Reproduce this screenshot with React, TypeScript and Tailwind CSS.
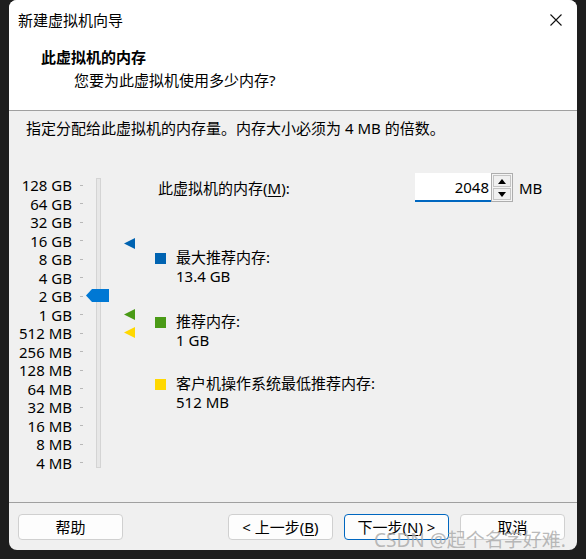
import React from "react";

const labels = [
  "128 GB",
  "64 GB",
  "32 GB",
  "16 GB",
  "8 GB",
  "4 GB",
  "2 GB",
  "1 GB",
  "512 MB",
  "256 MB",
  "128 MB",
  "64 MB",
  "32 MB",
  "16 MB",
  "8 MB",
  "4 MB",
];

function Marker({ color, top }: { color: string; top: string }) {
  return (
    <svg
      className={`absolute left-[115px] ${top}`}
      width="11"
      height="11"
      viewBox="0 0 11 11"
    >
      <polygon points="0,5.5 11,0 11,11" fill={color} />
    </svg>
  );
}

function Legend({
  color,
  title,
  value,
  className,
}: {
  color: string;
  title: string;
  value: string;
  className: string;
}) {
  return (
    <div className={`flex ${className}`}>
      <div className={`w-[11px] h-[11px] mt-[5px] ${color}`} />
      <div className="ml-[10px] leading-[19px]">
        <div>{title}</div>
        <div>{value}</div>
      </div>
    </div>
  );
}

export default function App() {
  return (
    <div className="relative w-[586px] h-[559px] bg-[#1e1e1e] pl-[9px] font-['Noto_Sans','Noto_Sans_CJK_SC',sans-serif] text-[15px] text-black">
      <div className="relative w-[568px] h-[550px] rounded-[8px] bg-[#f0f0f0] overflow-hidden flex flex-col">
        {/* Header */}
        <div className="h-[111px] bg-white border-b border-[#a0a0a0] flex flex-col">
          <div className="h-[40px] flex items-center justify-between pl-[9px] pr-[15px]">
            <span className="leading-[20px]">新建虚拟机向导</span>
            <svg width="12" height="12" viewBox="0 0 12 12">
              <path d="M0.5 0.5 L11.5 11.5 M11.5 0.5 L0.5 11.5" stroke="#111" strokeWidth="1.1" />
            </svg>
          </div>
          <div className="mt-[7px] pl-[32px] leading-[20px] font-bold">此虚拟机的内存</div>
          <div className="mt-[3px] pl-[65px] leading-[20px]">您要为此虚拟机使用多少内存?</div>
        </div>

        {/* Body */}
        <div className="flex-1 flex flex-col">
          <div className="mt-[7px] pl-[17px] leading-[20px]">
            指定分配给此虚拟机的内存量。内存大小必须为 4 MB 的倍数。
          </div>

          <div className="mt-[35px] flex">
            {/* Slider */}
            <div className="relative w-[146px] flex">
              <div className="pt-[3px] flex flex-col">
                {labels.map((l) => (
                  <div key={l} className="h-[18.53px] flex items-center">
                    <span className="w-[63px] text-right leading-[18px] whitespace-nowrap">{l}</span>
                    <span className="ml-[8px] w-[3px] h-px bg-[#b8b8b8]" />
                  </div>
                ))}
              </div>
              <div className="ml-[13px] mt-[5px] w-[5px] h-[290px] bg-[#e7e7e7] border border-[#d4d4d4]" />
              <svg
                className="absolute left-[77px] top-[116px]"
                width="23"
                height="13"
                viewBox="0 0 23 13"
              >
                <polygon points="0,6.5 6,0 23,0 23,13 6,13" fill="#0078d4" />
              </svg>
              <Marker color="#0063b1" top="top-[65px]" />
              <Marker color="#4a9a16" top="top-[136px]" />
              <Marker color="#ffd800" top="top-[154px]" />
            </div>

            {/* Right content */}
            <div className="flex flex-col">
              <div className="flex items-center h-[29px]">
                <span className="w-[260px] pl-[3px] leading-[20px]">
                  此虚拟机的内存(<span className="underline underline-offset-2">M</span>):
                </span>
                <div className="w-[76px] h-[29px] bg-white border-b-2 border-[#0067c0] flex items-center justify-end pr-[2px] leading-[20px]">
                  2048
                </div>
                <div className="w-[22px] h-[29px] border border-[#adadad] bg-[#f4f4f4] flex flex-col p-px gap-px">
                  <div className="flex-1 border border-[#c4c4c4] bg-[#f0f0f0] flex items-center justify-center">
                    <svg width="8" height="5" viewBox="0 0 8 5">
                      <polygon points="0,5 4,0 8,5" fill="#000" />
                    </svg>
                  </div>
                  <div className="flex-1 border border-[#c4c4c4] bg-[#f0f0f0] flex items-center justify-center">
                    <svg width="8" height="5" viewBox="0 0 8 5">
                      <polygon points="0,0 8,0 4,5" fill="#000" />
                    </svg>
                  </div>
                </div>
                <span className="ml-[6px] leading-[20px]">MB</span>
              </div>

              <Legend color="bg-[#0063b1]" title="最大推荐内存:" value="13.4 GB" className="mt-[46px]" />
              <Legend color="bg-[#4a9a16]" title="推荐内存:" value="1 GB" className="mt-[26px]" />
              <Legend color="bg-[#ffd800]" title="客户机操作系统最低推荐内存:" value="512 MB" className="mt-[24px]" />
            </div>
          </div>
        </div>

        {/* Footer */}
        <div className="h-[48px] border-t border-[#a0a0a0] pt-[11px] flex">
          <button className="ml-[9px] w-[105px] h-[26px] bg-[#fdfdfd] border border-[#d0d0d0] rounded-[4px] leading-[20px]">
            帮助
          </button>
          <div className="w-[105px]" />
          <div className="flex gap-[11px]">
            <button className="w-[105px] h-[26px] bg-[#fdfdfd] border border-[#d0d0d0] rounded-[4px] leading-[20px]">
              &lt; 上一步(<span className="underline underline-offset-2">B</span>)
            </button>
            <button className="w-[105px] h-[26px] bg-[#fdfdfd] border border-[#0067c0] rounded-[4px] leading-[20px]">
              下一步(<span className="underline underline-offset-2">N</span>) &gt;
            </button>
            <button className="w-[105px] h-[26px] bg-[#fdfdfd] border border-[#d0d0d0] rounded-[4px] leading-[20px]">
              取消
            </button>
          </div>
        </div>
      </div>

      {/* Watermark */}
      <div className="absolute left-[374px] top-[528px] text-[19px] leading-[24px] text-[#a8a8a8]/80 whitespace-nowrap pointer-events-none">
        CSDN @起个名字好难.
      </div>
    </div>
  );
}
